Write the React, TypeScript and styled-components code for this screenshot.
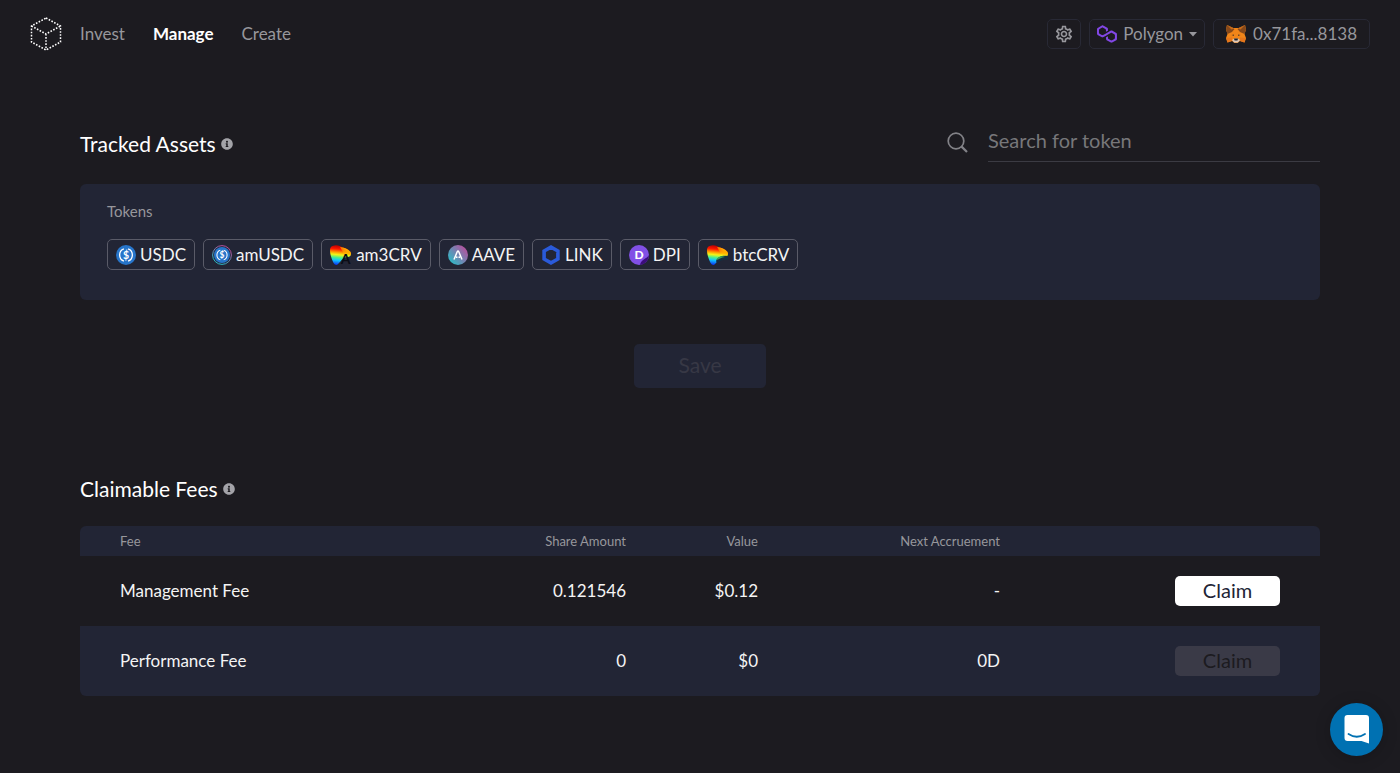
import React from 'react';
import styled, { createGlobalStyle } from 'styled-components';
import { FaInfoCircle } from 'react-icons/fa';
import { MdOutlineSettings } from 'react-icons/md';

const color = {
  page: '#1c1b20',
  panel: '#222535',
  line: '#282935',
  text: '#f4f4f4',
  muted: '#97979c',
};

const GlobalStyle = createGlobalStyle`
  * { box-sizing: border-box; }
  body {
    margin: 0;
    background: ${color.page};
    color: ${color.text};
    font-family: Lato, "Open Sans", sans-serif;
    font-size: 17px;
    line-height: 24px;
  }
  button, input { font: inherit; color: inherit; }
`;

const Header = styled.header`
  display: flex;
  align-items: center;
  justify-content: space-between;
  padding: 16px 30px;
  min-height: 68px;
`;

const Nav = styled.nav`
  display: flex;
  align-items: center;
  gap: 28px;
`;

const HomeLink = styled.a`
  display: flex;
  margin-right: -10px;
`;

const NavLink = styled.a<{ $active?: boolean }>`
  color: ${(p) => (p.$active ? '#ffffff' : color.muted)};
  font-weight: ${(p) => (p.$active ? 700 : 400)};
  text-decoration: none;
`;

const Toolbar = styled.div`
  display: flex;
  gap: 8px;
`;

const ToolButton = styled.button<{ $pad: number; $gap?: number }>`
  display: flex;
  align-items: center;
  gap: ${(p) => p.$gap ?? 6}px;
  height: 30px;
  padding: 0 ${(p) => p.$pad}px;
  border: 1px solid ${color.line};
  border-radius: 5px;
  background: transparent;
  color: ${color.muted};
  cursor: pointer;
`;

const Main = styled.main`
  padding: 58px 80px 76px;
`;

const SectionHead = styled.div`
  display: flex;
  align-items: center;
  justify-content: space-between;
`;

const Title = styled.h2`
  display: flex;
  align-items: center;
  gap: 5px;
  margin: 0;
  font-size: 21px;
  font-weight: 400;
  line-height: 28px;
  color: #ffffff;

  svg { color: #a3a3a8; }
`;

const Search = styled.label`
  display: flex;
  align-items: center;
  gap: 20px;

  svg { margin-bottom: 4px; }
`;

const SearchInput = styled.input`
  width: 332px;
  height: 36px;
  padding: 0 0 8px;
  border: 0;
  border-bottom: 1px solid #3b3b43;
  border-radius: 0;
  outline: 0;
  background: transparent;
  font-size: 20px;

  &::placeholder { color: #77777a; opacity: 1; }
`;

const Card = styled.section`
  margin-top: 22px;
  padding: 15px 27px 30px;
  border-radius: 6px;
  background: ${color.panel};
`;

const CardLabel = styled.h3`
  margin: 0 0 16px;
  color: ${color.muted};
  font-size: 15px;
  font-weight: 400;
  line-height: 24px;
`;

const Chips = styled.div`
  display: flex;
  flex-wrap: wrap;
  gap: 8px;
`;

const Chip = styled.button`
  display: flex;
  align-items: center;
  gap: 4px;
  height: 31px;
  padding: 0 8px;
  border: 1px solid #5a5b68;
  border-radius: 5px;
  background: transparent;
  cursor: pointer;
`;

const SaveButton = styled.button`
  display: block;
  width: 132px;
  height: 44px;
  margin: 44px auto 87px;
  padding: 0 0 2px;
  border: 0;
  border-radius: 5px;
  background: ${color.panel};
  color: #373845;
  font-size: 21px;
`;

const Table = styled.table`
  width: 100%;
  margin-top: 23px;
  border-collapse: collapse;
  table-layout: fixed;
  border-radius: 6px;
  overflow: hidden;
`;

const HeadCell = styled.th<{ $width?: number; $left?: boolean }>`
  width: ${(p) => (p.$width ? `${p.$width}px` : 'auto')};
  height: 30px;
  padding: 0 40px;
  background: ${color.panel};
  color: ${color.muted};
  font-size: 13px;
  font-weight: 400;
  line-height: 20px;
  text-align: ${(p) => (p.$left ? 'left' : 'right')};
  white-space: nowrap;
`;

const Row = styled.tr`
  &:nth-child(even) { background: ${color.panel}; }
`;

const Cell = styled.td<{ $left?: boolean }>`
  height: 70px;
  padding: 0 40px;
  text-align: ${(p) => (p.$left ? 'left' : 'right')};
`;

const ClaimButton = styled.button`
  width: 105px;
  height: 30px;
  padding: 0 0 3px;
  border: 0;
  border-radius: 5px;
  background: #ffffff;
  color: #222435;
  font-size: 20px;
  line-height: 24px;
  vertical-align: middle;
  cursor: pointer;

  &:disabled { background: #3a3a47; color: #1c1b20; cursor: default; }
`;

const ChatButton = styled.button`
  position: fixed;
  right: 17px;
  bottom: 17px;
  display: flex;
  align-items: center;
  justify-content: center;
  width: 53px;
  height: 53px;
  padding: 0;
  border: 0;
  border-radius: 50%;
  background: #0071b2;
  box-shadow: 0 2px 16px rgba(0, 0, 0, 0.2);
  cursor: pointer;
`;

const CubeLogo = () => (
  <svg width="32" height="34" viewBox="0 0 32 34" fill="none" stroke="#fff" strokeWidth="1.5" strokeDasharray="1.6 1.5" aria-hidden="true">
    <path d="M16 1 30.500 9V25L16 33 1.500 25V9Z" />
    <path d="M1.500 9 16 17 30.500 9M16 17V33" />
  </svg>
);

const PolygonLogo = () => (
  <svg width="20" height="18" viewBox="0 0 38.4 33.5" fill="#8247e5" aria-hidden="true">
    <path d="M29,10.2c-0.7-0.4-1.6-0.4-2.4,0L21,13.5l-3.8,2.1l-5.5,3.3c-0.7,0.4-1.6,0.4-2.4,0L5,16.3c-0.7-0.4-1.2-1.2-1.2-2.1v-5c0-0.8,0.4-1.6,1.2-2.1l4.3-2.5c0.7-0.4,1.6-0.4,2.4,0L16,7.2c0.7,0.4,1.2,1.2,1.2,2.1v3.3l3.8-2.2V7c0-0.8-0.4-1.6-1.2-2.1l-8-4.7c-0.7-0.4-1.6-0.4-2.4,0L1.2,5C0.4,5.4,0,6.2,0,7v9.4c0,0.8,0.4,1.6,1.2,2.1l8.1,4.7c0.7,0.4,1.6,0.4,2.4,0l5.5-3.2l3.8-2.2l5.5-3.2c0.7-0.4,1.6-0.4,2.4,0l4.3,2.5c0.7,0.4,1.2,1.2,1.2,2.1v5c0,0.8-0.4,1.6-1.2,2.1L29,28.8c-0.7,0.4-1.6,0.4-2.4,0l-4.3-2.5c-0.7-0.4-1.2-1.2-1.2-2.1V21l-3.8,2.2v3.3c0,0.8,0.4,1.6,1.2,2.1l8.1,4.7c0.7,0.4,1.6,0.4,2.4,0l8.1-4.7c0.7-0.4,1.2-1.2,1.2-2.1V17c0-0.8-0.4-1.6-1.2-2.1L29,10.2z" />
  </svg>
);

const Caret = () => (
  <svg width="8" height="5" viewBox="0 0 8 5" fill="currentColor" aria-hidden="true">
    <path d="M0 0H8L4 4.500Z" />
  </svg>
);

const FoxLogo = () => (
  <svg width="20" height="18" viewBox="0 0 40 36" aria-hidden="true">
    <path d="M2 0 15 6H25L38 0 40 9 37 18 40 26 37 35 28 32 23 36H17L12 32 3 35 0 26 3 18 0 9Z" fill="#f08519" />
    <path d="M2 0 17 8 12 14 3 18 0 9ZM38 0 23 8 28 14 37 18 40 9Z" fill="#85481a" />
    <path d="M3 1 16 7 11 9ZM37 1 24 7 29 9Z" fill="#c96d1b" />
    <path d="M12 25 0 26 3 35 12 32ZM28 25 40 26 37 35 28 32Z" fill="#e5761b" />
    <path d="M11 20 16 19 16 22ZM29 20 24 19 24 22Z" fill="#5a3a22" />
    <path d="M12 30 17 27H23L28 30 24 35H16Z" fill="#dccabf" />
    <path d="M16 27H24L23 31H17Z" fill="#20242b" />
  </svg>
);

const SearchIcon = () => (
  <svg width="21" height="21" viewBox="0 0 21 21" fill="none" stroke="#828287" strokeWidth="1.7" aria-hidden="true">
    <circle cx="9" cy="9" r="7.8" />
    <path d="M14.6 14.6 20 20" strokeWidth="2.2" />
  </svg>
);

const UsdcMark = ({ scale = 1 }: { scale?: number }) => (
  <g transform={`translate(${10 - 10 * scale} ${10 - 10 * scale}) scale(${scale})`}>
    <circle cx="10" cy="10" r="10" fill="#2775ca" />
    <path d="M7.9 3.9A6.5 6.5 0 0 0 7.9 16.1M12.1 3.9A6.5 6.5 0 0 1 12.1 16.1" fill="none" stroke="#fff" strokeWidth="1.3" />
    <text x="10" y="13.7" textAnchor="middle" fontSize="10.5" fontWeight="700" fill="#fff">$</text>
  </g>
);

const UsdcIcon = () => (
  <svg width="20" height="20" viewBox="0 0 20 20" aria-hidden="true"><UsdcMark /></svg>
);

const AmUsdcIcon = () => (
  <svg width="20" height="20" viewBox="0 0 20 20" aria-hidden="true">
    <defs>
      <linearGradient id="ring" x1="0.8" y1="0" x2="0.2" y2="1">
        <stop offset="0.15" stopColor="#b6509e" />
        <stop offset="0.85" stopColor="#2ebac6" />
      </linearGradient>
    </defs>
    <circle cx="10" cy="10" r="9.4" fill="none" stroke="url(#ring)" strokeWidth="1" />
    <UsdcMark scale={0.8} />
  </svg>
);

const CurveIcon = ({ id, aave }: { id: string; aave?: boolean }) => (
  <svg width="22" height="20" viewBox="0 0 22 20" overflow="visible" aria-hidden="true">
    <defs>
      <linearGradient id={id} gradientUnits="userSpaceOnUse" x1="8" y1="0" x2="6" y2="20">
        <stop offset="0" stopColor="#b00000" />
        <stop offset="0.2" stopColor="#ff1500" />
        <stop offset="0.36" stopColor="#ff9d00" />
        <stop offset="0.48" stopColor="#f4f516" />
        <stop offset="0.62" stopColor="#4cf08a" />
        <stop offset="0.76" stopColor="#12c4ff" />
        <stop offset="1" stopColor="#0b2cf0" />
      </linearGradient>
      <linearGradient id={`${id}-edge`} gradientUnits="userSpaceOnUse" x1="10" y1="8" x2="15" y2="3">
        <stop offset="0" stopColor="#ffd400" stopOpacity="0" />
        <stop offset="1" stopColor="#ffb000" />
      </linearGradient>
    </defs>
    <path d="M5.500 0.300C9 0 10 1.500 13 2.500C17 3.500 21 6 21 9C21 12 18 12 15 12.500C11 14 9.500 19 6.500 20C4 20 3 17 1.500 13C0.500 10 0 8 0 5C0 2 2 0.500 5.500 0.300Z" fill={`url(#${id})`} />
    <path d="M10 2 13 2.500C17 3.500 21 6 21 9L14 9Z" fill={`url(#${id}-edge)`} />
    {aave ? (
      <text x="15.500" y="18.500" textAnchor="middle" fontSize="14" fontWeight="700" fill="#0a0c14">A</text>
    ) : (
      <>
        <path d="M9 16C11 11 16 10 21 11L21 15C17 14 13 16 10 18Z" fill="#152d40" />
        <path d="M9 15C11 11.500 15 10.500 18 12C14 12.500 12 14.500 9 15Z" fill="#37a05a" />
      </>
    )}
  </svg>
);

const AaveIcon = () => (
  <svg width="20" height="20" viewBox="0 0 20 20" aria-hidden="true">
    <defs>
      <linearGradient id="aave" x1="0.9" y1="0.15" x2="0.1" y2="0.85">
        <stop offset="0" stopColor="#b6509e" />
        <stop offset="1" stopColor="#2ebac6" />
      </linearGradient>
    </defs>
    <circle cx="10" cy="10" r="10" fill="url(#aave)" />
    <path d="M6.200 14 9.200 6.800Q10 5.400 10.800 6.800L13.800 14" fill="none" stroke="#fff" strokeWidth="1.500" strokeLinecap="round" />
    <circle cx="8.700" cy="12.200" r="0.900" fill="#fff" />
    <circle cx="11.300" cy="12.200" r="0.900" fill="#fff" />
  </svg>
);

const LinkIcon = () => (
  <svg width="20" height="20" viewBox="0 0 20 20" fill="none" stroke="#2a5ada" strokeWidth="3.600" aria-hidden="true">
    <path d="M10 2.100 16.900 6V14L10 17.900 3.100 14V6Z" />
  </svg>
);

const DpiIcon = () => (
  <svg width="20" height="20" viewBox="0 0 20 20" aria-hidden="true">
    <circle cx="10" cy="10" r="10" fill="#8150e6" />
    <path d="M11 20A10 10 0 0 0 20 10C18 14 12 14 11 20Z" fill="#3c0d7c" />
    <text x="10" y="14" textAnchor="middle" fontSize="12" fontWeight="900" fill="#fff">D</text>
  </svg>
);

const ChatIcon = () => (
  <svg width="26" height="30" viewBox="0 0 26 30" aria-hidden="true">
    <path d="M3.500 0H22A3 3 0 0 1 25 3V28.500L17.500 26H3.500A3 3 0 0 1 0.500 23V3A3 3 0 0 1 3.500 0Z" fill="#fff" />
    <path d="M4.500 19Q12.800 24.500 21 19" fill="none" stroke="#0071b2" strokeWidth="1.800" strokeLinecap="round" />
  </svg>
);

const tokens = [
  { name: 'USDC', icon: <UsdcIcon /> },
  { name: 'amUSDC', icon: <AmUsdcIcon /> },
  { name: 'am3CRV', icon: <CurveIcon id="curve-am3" aave /> },
  { name: 'AAVE', icon: <AaveIcon /> },
  { name: 'LINK', icon: <LinkIcon /> },
  { name: 'DPI', icon: <DpiIcon /> },
  { name: 'btcCRV', icon: <CurveIcon id="curve-btc" /> },
];

const fees = [
  { name: 'Management Fee', shares: '0.121546', value: '$0.12', next: '-', claimable: true },
  { name: 'Performance Fee', shares: '0', value: '$0', next: '0D', claimable: false },
];

export default function App() {
  return (
    <>
      <GlobalStyle />
      <Header>
        <Nav>
          <HomeLink href="#home" aria-label="Home"><CubeLogo /></HomeLink>
          <NavLink href="#invest">Invest</NavLink>
          <NavLink href="#manage" $active>Manage</NavLink>
          <NavLink href="#create">Create</NavLink>
        </Nav>
        <Toolbar>
          <ToolButton $pad={6} aria-label="Settings"><MdOutlineSettings size={20} /></ToolButton>
          <ToolButton $pad={7}><PolygonLogo />Polygon<Caret /></ToolButton>
          <ToolButton $pad={12} $gap={7}><FoxLogo />0x71fa...8138</ToolButton>
        </Toolbar>
      </Header>
      <Main>
        <SectionHead>
          <Title>Tracked Assets <FaInfoCircle size={12} /></Title>
          <Search aria-label="Search for token">
            <SearchIcon />
            <SearchInput type="text" placeholder="Search for token" />
          </Search>
        </SectionHead>
        <Card>
          <CardLabel>Tokens</CardLabel>
          <Chips>
            {tokens.map((t) => (
              <Chip key={t.name}>{t.icon}{t.name}</Chip>
            ))}
          </Chips>
        </Card>
        <SaveButton disabled>Save</SaveButton>
        <Title>Claimable Fees <FaInfoCircle size={12} /></Title>
        <Table>
          <thead>
            <tr>
              <HeadCell $left>Fee</HeadCell>
              <HeadCell $width={202}>Share Amount</HeadCell>
              <HeadCell $width={132}>Value</HeadCell>
              <HeadCell $width={242}>Next Accruement</HeadCell>
              <HeadCell $width={280} aria-label="Action" />
            </tr>
          </thead>
          <tbody>
            {fees.map((f) => (
              <Row key={f.name}>
                <Cell $left>{f.name}</Cell>
                <Cell>{f.shares}</Cell>
                <Cell>{f.value}</Cell>
                <Cell>{f.next}</Cell>
                <Cell><ClaimButton disabled={!f.claimable}>Claim</ClaimButton></Cell>
              </Row>
            ))}
          </tbody>
        </Table>
      </Main>
      <ChatButton aria-label="Open chat"><ChatIcon /></ChatButton>
    </>
  );
}
